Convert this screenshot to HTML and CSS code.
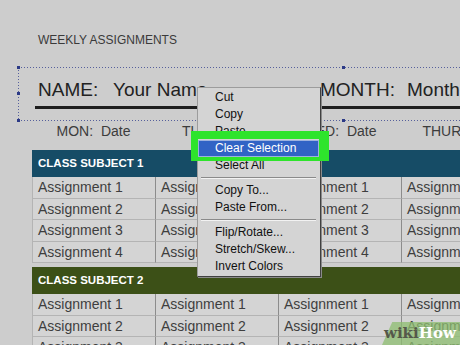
FILE: index.html
```html
<!DOCTYPE html>
<html lang="en">
<head>
  <meta charset="UTF-8">
  <meta name="viewport" content="width=device-width, initial-scale=1.0">
  <title>Weekly Assignments</title>
  <link rel="stylesheet" href="styles.css">
</head>
<body>
  <div class="sheet">
    <div class="title">WEEKLY ASSIGNMENTS</div>

    <!-- dotted selection around the name line -->
    <div class="selection">
      <span class="handle h-tl"></span>
      <span class="handle h-ml"></span>
      <span class="handle h-bl"></span>
      <span class="handle h-tm"></span>
      <span class="handle h-bm"></span>
      <div class="name-line">
        <span class="name-label">NAME:</span>
        <span class="name-value">Your Name</span>
        <span class="month-label">MONTH:</span>
        <span class="month-value">Month</span>
      </div>
    </div>

    <div class="days">
      <span>MON:&nbsp; Date</span>
      <span>TUE:&nbsp; Date</span>
      <span>WED:&nbsp; Date</span>
      <span>THUR:&nbsp; Date</span>
    </div>

    <div class="subject">
      <div class="subject-head head-blue">CLASS SUBJECT 1</div>
      <div class="grid">
        <div class="cell">Assignment 1</div><div class="cell">Assignment 1</div><div class="cell">Assignment 1</div><div class="cell">Assignment 1</div>
        <div class="cell">Assignment 2</div><div class="cell">Assignment 2</div><div class="cell">Assignment 2</div><div class="cell">Assignment 2</div>
        <div class="cell">Assignment 3</div><div class="cell">Assignment 3</div><div class="cell">Assignment 3</div><div class="cell">Assignment 3</div>
        <div class="cell">Assignment 4</div><div class="cell">Assignment 4</div><div class="cell">Assignment 4</div><div class="cell">Assignment 4</div>
      </div>
    </div>

    <div class="subject">
      <div class="subject-head head-green">CLASS SUBJECT 2</div>
      <div class="grid">
        <div class="cell">Assignment 1</div><div class="cell">Assignment 1</div><div class="cell">Assignment 1</div><div class="cell">Assignment 1</div>
        <div class="cell">Assignment 2</div><div class="cell">Assignment 2</div><div class="cell">Assignment 2</div><div class="cell">Assignment 2</div>
        <div class="cell">Assignment 3</div><div class="cell">Assignment 3</div><div class="cell">Assignment 3</div><div class="cell">Assignment 3</div>
      </div>
    </div>
  </div>

  <!-- right-click menu -->
  <div class="menu">
    <div class="item">Cut</div>
    <div class="item">Copy</div>
    <div class="item">Paste</div>
    <div class="item active">Clear Selection</div>
    <div class="item">Select All</div>
    <div class="sep"></div>
    <div class="item">Copy To...</div>
    <div class="item">Paste From...</div>
    <div class="sep"></div>
    <div class="item">Flip/Rotate...</div>
    <div class="item">Stretch/Skew...</div>
    <div class="item">Invert Colors</div>
  </div>

  <div class="callout"></div>

  <div class="watermark">
    <span class="badge"></span>
    <span class="wiki">wiki</span><span class="how">How</span>
  </div>
</body>
</html>
```

FILE: styles.css
```css
/* General styles */
body {
  margin: 0;
  width: 460px;
  height: 345px;
  overflow: hidden;
  position: relative;
  background-color: #cdcdcd;
  font-family: "Liberation Sans", Arial, sans-serif;
  color: #333;
}

.sheet {
  width: 700px;
  padding-top: 33px;
}

.title {
  margin-left: 38px;
  font-size: 12px;
  line-height: 14px;
  color: #3a3a3a;
}

/* Selection box with dotted edges */
.selection {
  position: relative;
  box-sizing: border-box;
  margin: 20px 0 0 18px;
  width: 650px;
  height: 54px;
  padding: 12px 0 0 17px;
  background:
    repeating-linear-gradient(90deg, #56609c 0 1px, transparent 1px 3px) top left / 100% 1px no-repeat,
    repeating-linear-gradient(90deg, #56609c 0 1px, transparent 1px 3px) bottom left / 100% 1px no-repeat,
    repeating-linear-gradient(180deg, #56609c 0 1px, transparent 1px 3px) top left / 1px 100% no-repeat,
    repeating-linear-gradient(180deg, #56609c 0 1px, transparent 1px 3px) top right / 1px 100% no-repeat;
}

.handle {
  position: absolute;
  width: 3px;
  height: 3px;
  background-color: #2c3a86;
}

.h-tl { left: -1px; top: -1px; }
.h-ml { left: -1px; top: 25px; }
.h-bl { left: -1px; bottom: -1px; }
.h-tm { left: 324px; top: -1px; }
.h-bm { left: 324px; bottom: -1px; }

.name-line {
  display: flex;
  padding: 0 0 5px 3px;
  border-bottom: 3px solid #1e1e1e;
  font-size: 19px;
  line-height: 22px;
  color: #222;
  white-space: nowrap;
}

.name-label { width: 75px; }
.name-value { width: 207px; }
.month-label { width: 87px; }

.days {
  display: grid;
  grid-template-columns: repeat(4, 123px);
  margin: 2px 0 0 32px;
  font-size: 14px;
  line-height: 16px;
  color: #3c3c3c;
  text-align: center;
}

/* Subject tables */
.subject {
  margin: 11px 0 0 32px;
}

.subject + .subject {
  margin-top: 4px;
}

.subject-head {
  height: 27px;
  line-height: 27px;
  padding-left: 6px;
  font-size: 11.5px;
  font-weight: bold;
  color: #fff;
}

.head-blue { background-color: #164c66; }
.head-green { background-color: #3c5017; }

.grid {
  display: grid;
  grid-template-columns: repeat(4, 123px);
  border-left: 1px solid #b4b4b4;
}

.cell {
  box-sizing: border-box;
  height: 21.5px;
  line-height: 21px;
  padding-left: 5px;
  font-size: 14px;
  color: #3e3e3e;
  background-color: #d4d4d4;
  border-right: 1px solid #8c8c8c;
  border-bottom: 1px solid #b4b4b4;
  white-space: nowrap;
  overflow: hidden;
}

/* Context menu */
.menu {
  position: absolute;
  left: 197px;
  top: 87px;
  box-sizing: border-box;
  width: 124px;
  padding: 1px 1px 1px 0;
  background-color: #d4d4d4;
  border: 1px solid #9c9c9c;
  border-right-color: #404040;
  border-bottom-color: #404040;
  box-shadow: 1px 1px 0 #8a8a8a;
  font-size: 12px;
  color: #111;
}

.item {
  box-sizing: border-box;
  height: 17px;
  line-height: 17px;
  padding-left: 17px;
  white-space: nowrap;
}

.item.active {
  background-color: #3163c5;
  border: 1px solid #9cb2df;
  line-height: 15px;
  padding-left: 16px;
  color: #fff;
}

.sep {
  height: 8px;
  margin: 0 3px;
  background:
    linear-gradient(#8a8a8a, #8a8a8a) 0 3px / 100% 1px no-repeat,
    linear-gradient(#f2f2f2, #f2f2f2) 0 4px / 100% 1px no-repeat;
}

/* Green highlight drawn over the screenshot */
.callout {
  position: absolute;
  left: 191px;
  top: 131px;
  box-sizing: border-box;
  width: 138px;
  height: 30px;
  border-style: solid;
  border-color: #2ee42c;
  border-width: 8px 10px 4px 7px;
}

/* Watermark */
.watermark {
  position: absolute;
  left: 384px;
  top: 322px;
  height: 23px;
  width: 80px;
  font-family: "DejaVu Serif", "Liberation Serif", serif;
  font-weight: bold;
  font-size: 15px;
  line-height: 23px;
}

.badge {
  position: absolute;
  left: -2px;
  top: 0;
  width: 90px;
  height: 23px;
  background-color: rgba(142, 190, 112, 0.75);
  transform: skewX(-24deg);
  transform-origin: bottom left;
}

.wiki,
.how {
  position: relative;
}

.wiki { color: #55584a; }
.how { color: #fff; }
```
